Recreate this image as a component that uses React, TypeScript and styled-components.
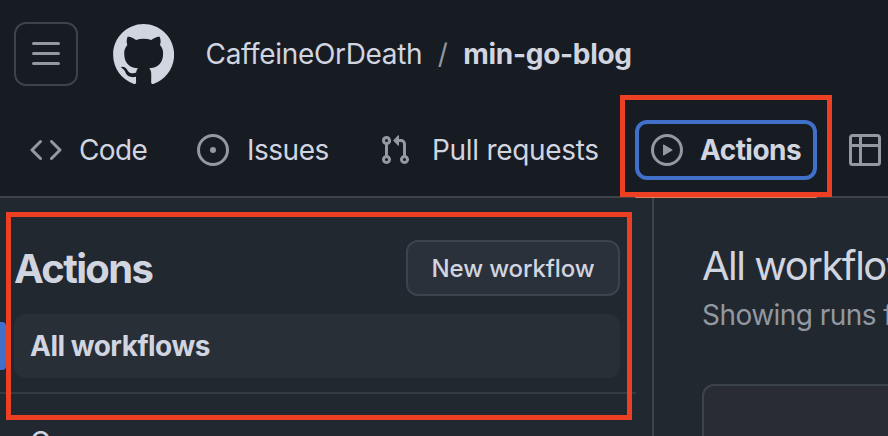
import React from 'react';
import styled, { createGlobalStyle } from 'styled-components';

const c = {
  header: '#171b22',
  canvas: '#22282f',
  fg: '#d1d5e0',
  muted: '#9198a1',
  icon: '#9498a0',
  border: '#3d434a',
  blue: '#4070c9',
  red: '#ed4022',
};

const GlobalStyle = createGlobalStyle`
  * { box-sizing: border-box; }
  body { margin: 0; background: ${c.canvas}; overflow: hidden; }
`;

const Page = styled.div`
  position: relative;
  width: 888px;
  height: 436px;
  overflow: hidden;
  display: flex;
  flex-direction: column;
  background: ${c.canvas};
  color: ${c.fg};
  font-family: Inter, 'Liberation Sans', sans-serif;
  font-size: 28px;
`;

const Header = styled.header`
  flex: none;
  height: 198px;
  background: ${c.header};
  border-bottom: 2px solid ${c.border};
`;

const TopBar = styled.div`
  display: flex;
  align-items: center;
  height: 108px;
  padding-left: 14px;
`;

const MenuButton = styled.button`
  display: flex;
  align-items: center;
  justify-content: center;
  width: 64px;
  height: 64px;
  padding: 0;
  margin-right: 34.5px;
  color: ${c.icon};
  background: transparent;
  border: 2px solid ${c.border};
  border-radius: 12px;
`;

const Logo = styled.svg`
  width: 61.5px;
  height: 60px;
  fill: ${c.fg};
  margin-right: 31.5px;
`;

const Text = styled.span<{ $track?: number; $weight?: number }>`
  white-space: nowrap;
  line-height: 40px;
  letter-spacing: ${(p) => p.$track ?? 0}px;
  font-weight: ${(p) => p.$weight ?? 400};
`;

const Crumbs = styled.div`
  display: flex;
  align-items: center;
`;

const Slash = styled.span`
  width: 41px;
  text-align: center;
  color: ${c.muted};
`;

const Nav = styled.nav`
  display: flex;
  align-items: center;
  height: 84px;
  padding-left: 14px;
`;

const Tab = styled.a<{ $width: number; $gap?: number; $selected?: boolean }>`
  position: relative;
  flex: none;
  display: flex;
  align-items: center;
  gap: ${(p) => p.$gap ?? 17}px;
  width: ${(p) => p.$width}px;
  height: 60px;
  margin-right: ${(p) => (p.$selected ? 16 : 0)}px;
  padding-left: 16px;
  border-radius: 12px;
  box-shadow: ${(p) => (p.$selected ? `inset 0 0 0 4px ${c.blue}` : 'none')};
  &::after {
    content: '';
    display: ${(p) => (p.$selected ? 'block' : 'none')};
    position: absolute;
    left: 0;
    right: 0;
    bottom: -18px;
    height: 3px;
    background: #e0805f;
    border-radius: 2px;
  }
`;

const Glyph = styled.svg`
  flex: none;
  width: 32px;
  height: 32px;
  fill: ${c.icon};
`;

const Body = styled.div`
  flex: 1;
  display: flex;
`;

const Sidebar = styled.aside`
  flex: none;
  width: 654px;
  padding-top: 42px;
  border-right: 2px solid ${c.border};
`;

const SidebarHead = styled.div`
  display: flex;
  align-items: center;
  justify-content: space-between;
  height: 56px;
  padding: 0 32px 0 14px;
`;

const Heading = styled.h2`
  margin: 0;
  padding-top: 2px;
  font-size: 40px;
  font-weight: 700;
  line-height: 56px;
  letter-spacing: -1.65px;
`;

const Button = styled.button`
  width: 214px;
  height: 56px;
  padding: 0;
  font: 500 24px Inter, sans-serif;
  letter-spacing: -0.12px;
  white-space: nowrap;
  color: ${c.fg};
  background: #2b313b;
  border: 2px solid ${c.border};
  border-radius: 12px;
`;

const NavRow = styled.div`
  display: flex;
  align-items: center;
  height: 64px;
  margin-top: 18px;
`;

const Marker = styled.div`
  width: 6px;
  height: 48px;
  margin-right: 8px;
  background: ${c.blue};
  border-radius: 0 4px 4px 0;
`;

const NavItem = styled.div<{ $active?: boolean }>`
  display: flex;
  align-items: center;
  width: 606px;
  height: 64px;
  padding-left: 16px;
  border-radius: 12px;
  background: ${(p) => (p.$active ? '#292f36' : 'transparent')};
`;

const Divider = styled.hr`
  width: 636px;
  height: 2px;
  margin: 14px 0 0;
  border: 0;
  background: #343a42;
`;

const WorkflowList = styled.div`
  padding: 16px 0 0 14px;
`;

const Main = styled.main`
  flex: 1;
  min-width: 0;
  overflow: hidden;
  padding: 41px 0 0 48px;
`;

const Title = styled.h1`
  margin: 0;
  font-size: 40px;
  font-weight: 400;
  line-height: 54px;
  letter-spacing: -1.5px;
  white-space: nowrap;
`;

const Subtitle = styled.p`
  margin: 1px 0 0;
  font-size: 28px;
  line-height: 42px;
  letter-spacing: -0.55px;
  color: ${c.muted};
  white-space: nowrap;
`;

const Card = styled.section`
  width: 400px;
  height: 100px;
  margin-top: 48px;
  background: #292c34;
  border: 2px solid ${c.border};
  border-radius: 12px;
`;

const Highlight = styled.div<{ $x: number; $y: number; $w: number; $h: number }>`
  position: absolute;
  left: ${(p) => p.$x}px;
  top: ${(p) => p.$y}px;
  width: ${(p) => p.$w}px;
  height: ${(p) => p.$h}px;
  border: 5px solid ${c.red};
  pointer-events: none;
`;

const Icon = ({ d }: { d: string }) => (
  <Glyph viewBox="0 0 16 16">
    <path d={d} />
  </Glyph>
);

const icons = {
  bars: 'M1 2.75A.75.75 0 0 1 1.75 2h12.5a.75.75 0 0 1 0 1.5H1.75A.75.75 0 0 1 1 2.75Zm0 5A.75.75 0 0 1 1.75 7h12.5a.75.75 0 0 1 0 1.5H1.75A.75.75 0 0 1 1 7.75ZM1.75 12h12.5a.75.75 0 0 1 0 1.5H1.75a.75.75 0 0 1 0-1.5Z',
  code: 'm11.28 3.22 4.25 4.25a.75.75 0 0 1 0 1.06l-4.25 4.25a.749.749 0 0 1-1.275-.326.749.749 0 0 1 .215-.734L13.94 8l-3.72-3.72a.749.749 0 0 1 .326-1.275.749.749 0 0 1 .734.215Zm-6.56 0a.751.751 0 0 1 1.042.018.751.751 0 0 1 .018 1.042L2.06 8l3.72 3.72a.749.749 0 0 1-.326 1.275.749.749 0 0 1-.734-.215L.47 8.53a.75.75 0 0 1 0-1.06Z',
  issue: 'M8 9.5a1.5 1.5 0 1 0 0-3 1.5 1.5 0 0 0 0 3ZM8 0a8 8 0 1 1 0 16A8 8 0 0 1 8 0ZM1.5 8a6.5 6.5 0 1 0 13 0 6.5 6.5 0 0 0-13 0Z',
  pull: 'M1.5 3.25a2.25 2.25 0 1 1 3 2.122v5.256a2.251 2.251 0 1 1-1.5 0V5.372A2.25 2.25 0 0 1 1.5 3.25Zm5.677-.177L9.573.677A.25.25 0 0 1 10 .854V2.5h1A2.5 2.5 0 0 1 13.5 5v5.628a2.251 2.251 0 1 1-1.5 0V5a1 1 0 0 0-1-1h-1v1.646a.25.25 0 0 1-.427.177L7.177 3.427a.25.25 0 0 1 0-.354ZM3.75 2.5a.75.75 0 1 0 0 1.5.75.75 0 0 0 0-1.5Zm0 9.5a.75.75 0 1 0 0 1.5.75.75 0 0 0 0-1.5Zm8.25.75a.75.75 0 1 0 1.5 0 .75.75 0 0 0-1.5 0Z',
  play: 'M8 0a8 8 0 1 1 0 16A8 8 0 0 1 8 0ZM1.5 8a6.5 6.5 0 1 0 13 0 6.5 6.5 0 0 0-13 0Zm4.879-2.773 4.264 2.559a.25.25 0 0 1 0 .428l-4.264 2.559A.25.25 0 0 1 6 10.559V5.442a.25.25 0 0 1 .379-.215Z',
  table: 'M0 1.75C0 .784.784 0 1.75 0h12.5C15.216 0 16 .784 16 1.75v12.5A1.75 1.75 0 0 1 14.25 16H1.75A1.75 1.75 0 0 1 0 14.25ZM6.5 6.5v8h7.75a.25.25 0 0 0 .25-.25V6.5Zm8-1.5V1.75a.25.25 0 0 0-.25-.25H6.5V5Zm-13 1.5v7.75c0 .138.112.25.25.25H5v-8ZM5 5V1.5H1.75a.25.25 0 0 0-.25.25V5Z',
};

export default function App() {
  return (
    <Page>
      <GlobalStyle />
      <Header>
        <TopBar>
          <MenuButton aria-label="Menu">
            <Icon d={icons.bars} />
          </MenuButton>
          <Logo viewBox="0 0 98 96">
            <path d="M48.854 0C21.839 0 0 22 0 49.217c0 21.756 13.993 40.172 33.405 46.69 2.427.49 3.316-1.059 3.316-2.362 0-1.141-.08-5.052-.08-9.127-13.59 2.934-16.42-5.867-16.42-5.867-2.184-5.704-5.42-7.17-5.42-7.17-4.448-3.015.324-3.015.324-3.015 4.934.326 7.523 5.052 7.523 5.052 4.367 7.496 11.404 5.378 14.235 4.074.404-3.178 1.699-5.378 3.074-6.6-10.839-1.141-22.243-5.378-22.243-24.283 0-5.378 1.94-9.778 5.014-13.2-.485-1.222-2.184-6.275.486-13.038 0 0 4.125-1.304 13.426 5.052a46.97 46.97 0 0 1 12.214-1.63c4.125 0 8.33.571 12.213 1.63 9.302-6.356 13.427-5.052 13.427-5.052 2.67 6.763.97 11.816.485 13.038 3.155 3.422 5.015 7.822 5.015 13.2 0 18.905-11.404 23.06-22.324 24.283 1.78 1.548 3.316 4.481 3.316 9.126 0 6.6-.08 11.897-.08 13.526 0 1.304.89 2.853 3.316 2.364 19.412-6.52 33.405-24.935 33.405-46.691C97.707 22 75.788 0 48.854 0z" />
          </Logo>
          <Crumbs>
            <Text $track={-0.32}>CaffeineOrDeath</Text>
            <Slash>/</Slash>
            <Text $weight={700} $track={-0.3}>min-go-blog</Text>
          </Crumbs>
        </TopBar>
        <Nav>
          <Tab $width={167}>
            <Icon d={icons.code} />
            <Text $track={-0.6}>Code</Text>
          </Tab>
          <Tab $width={182} $gap={18}>
            <Icon d={icons.issue} />
            <Text $track={-0.5}>Issues</Text>
          </Tab>
          <Tab $width={272} $gap={21}>
            <Icon d={icons.pull} />
            <Text $track={-0.3}>Pull requests</Text>
          </Tab>
          <Tab $width={182} $selected>
            <Icon d={icons.play} />
            <Text $weight={700} $track={-0.55}>Actions</Text>
          </Tab>
          <Tab $width={60}>
            <Icon d={icons.table} />
          </Tab>
        </Nav>
      </Header>
      <Body>
        <Sidebar>
          <SidebarHead>
            <Heading>Actions</Heading>
            <Button>New workflow</Button>
          </SidebarHead>
          <NavRow>
            <Marker />
            <NavItem $active>
              <Text $weight={700} $track={-0.5}>All workflows</Text>
            </NavItem>
          </NavRow>
          <Divider />
          <WorkflowList>
            <NavItem>
              <Text>Go</Text>
            </NavItem>
          </WorkflowList>
        </Sidebar>
        <Main>
          <Title>All workflows</Title>
          <Subtitle>Showing runs from all workflows</Subtitle>
          <Card />
        </Main>
      </Body>
      <Highlight $x={620} $y={95} $w={212} $h={102} />
      <Highlight $x={6} $y={212} $w={626} $h={208} />
    </Page>
  );
}
